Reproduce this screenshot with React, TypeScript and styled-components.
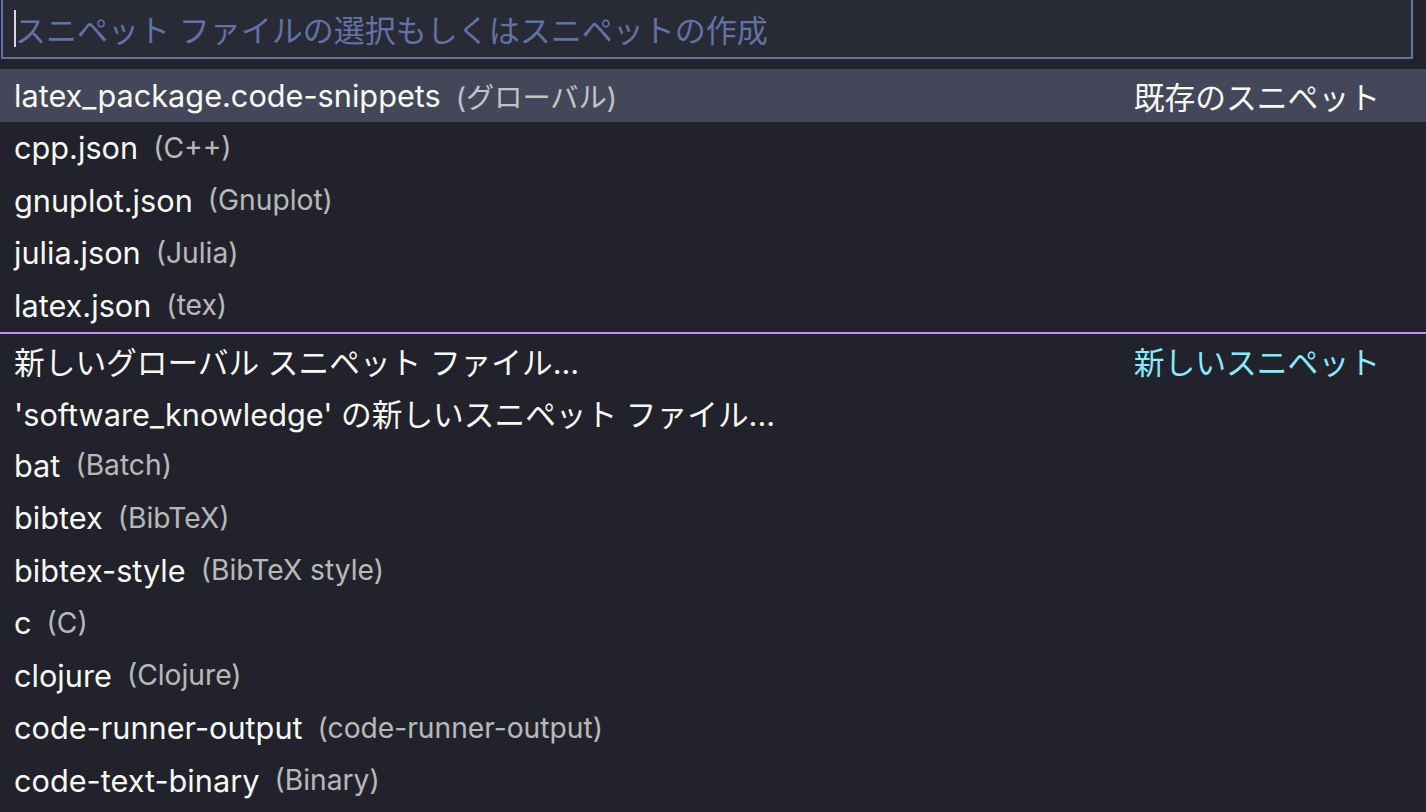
import React from "react";
import styled, { createGlobalStyle, css } from "styled-components";

const GlobalStyle = createGlobalStyle`
    html, body {
        margin: 0;
        height: 100%;
        background: #21222c;
        overflow: hidden;
    }

    body {
        font-family: Inter, "Noto Sans CJK JP", sans-serif;
        color: #f8f8f2;
    }
`;

type Entry = {
    label: string;
    description?: string;
    tag?: string;
    tagKind?: "existing" | "new";
    separated?: boolean;
    selected?: boolean;
};

const entries: Entry[] = [
    {
        label: "latex_package.code-snippets",
        description: "(グローバル)",
        tag: "既存のスニペット",
        tagKind: "existing",
        selected: true,
    },
    { label: "cpp.json", description: "(C++)" },
    { label: "gnuplot.json", description: "(Gnuplot)" },
    { label: "julia.json", description: "(Julia)" },
    { label: "latex.json", description: "(tex)" },
    {
        label: "新しいグローバル スニペット ファイル...",
        tag: "新しいスニペット",
        tagKind: "new",
        separated: true,
    },
    { label: "'software_knowledge' の新しいスニペット ファイル..." },
    { label: "bat", description: "(Batch)" },
    { label: "bibtex", description: "(BibTeX)" },
    { label: "bibtex-style", description: "(BibTeX style)" },
    { label: "c", description: "(C)" },
    { label: "clojure", description: "(Clojure)" },
    { label: "code-runner-output", description: "(code-runner-output)" },
    { label: "code-text-binary", description: "(Binary)" },
];

const Widget = styled.div`
    display: flex;
    flex-direction: column;
    width: 1426px;
    height: 812px;
    overflow: hidden;
`;

const InputBar = styled.div`
    padding: 0 13px 10px 1px;
    margin-top: -2px;
`;

const InputBox = styled.div`
    position: relative;
    height: 57px;
    border: 2px solid #6272a4;
    background: #282a36;
    display: flex;
    align-items: center;
    padding-left: 12px;
`;

const Caret = styled.span`
    position: absolute;
    left: 11px;
    top: 10px;
    width: 2px;
    height: 37px;
    background: #d8d8e0;
`;

const Placeholder = styled.span`
    font-size: 31px;
    color: #6272a4;
`;

const List = styled.ul`
    list-style: none;
    margin: 0;
    padding: 0;
`;

const Row = styled.li<{ $selected?: boolean; $separated?: boolean }>`
    height: 52.5px;
    display: flex;
    align-items: center;
    padding: 0 46px 0 14px;
    white-space: nowrap;

    ${({ $selected }) =>
        $selected &&
        css`
            background: #44475a;
        `}

    ${({ $separated }) =>
        $separated &&
        css`
            border-top: 2px solid #bd93f9;
            margin-top: 0.5px;
        `}
`;

const Label = styled.span`
    font-size: 30.7px;
    color: #f8f8f2;
`;

const Description = styled.span`
    font-size: 28.2px;
    margin-left: 15px;
    color: #f8f8f2;
    opacity: 0.7;
`;

const Tag = styled.span<{ $kind: "existing" | "new" }>`
    margin-left: auto;
    font-size: 30.8px;
    color: ${({ $kind }) => ($kind === "new" ? "#8be9fd" : "#f8f8f2")};
`;

export default function App() {
    return (
        <>
            <GlobalStyle />
            <Widget>
                <InputBar>
                    <InputBox>
                        <Caret />
                        <Placeholder>
                            スニペット ファイルの選択もしくはスニペットの作成
                        </Placeholder>
                    </InputBox>
                </InputBar>
                <List>
                    {entries.map((entry) => (
                        <Row
                            key={entry.label}
                            $selected={entry.selected}
                            $separated={entry.separated}
                        >
                            <Label>{entry.label}</Label>
                            {entry.description && (
                                <Description>{entry.description}</Description>
                            )}
                            {entry.tag && entry.tagKind && (
                                <Tag $kind={entry.tagKind}>{entry.tag}</Tag>
                            )}
                        </Row>
                    ))}
                </List>
            </Widget>
        </>
    );
}
